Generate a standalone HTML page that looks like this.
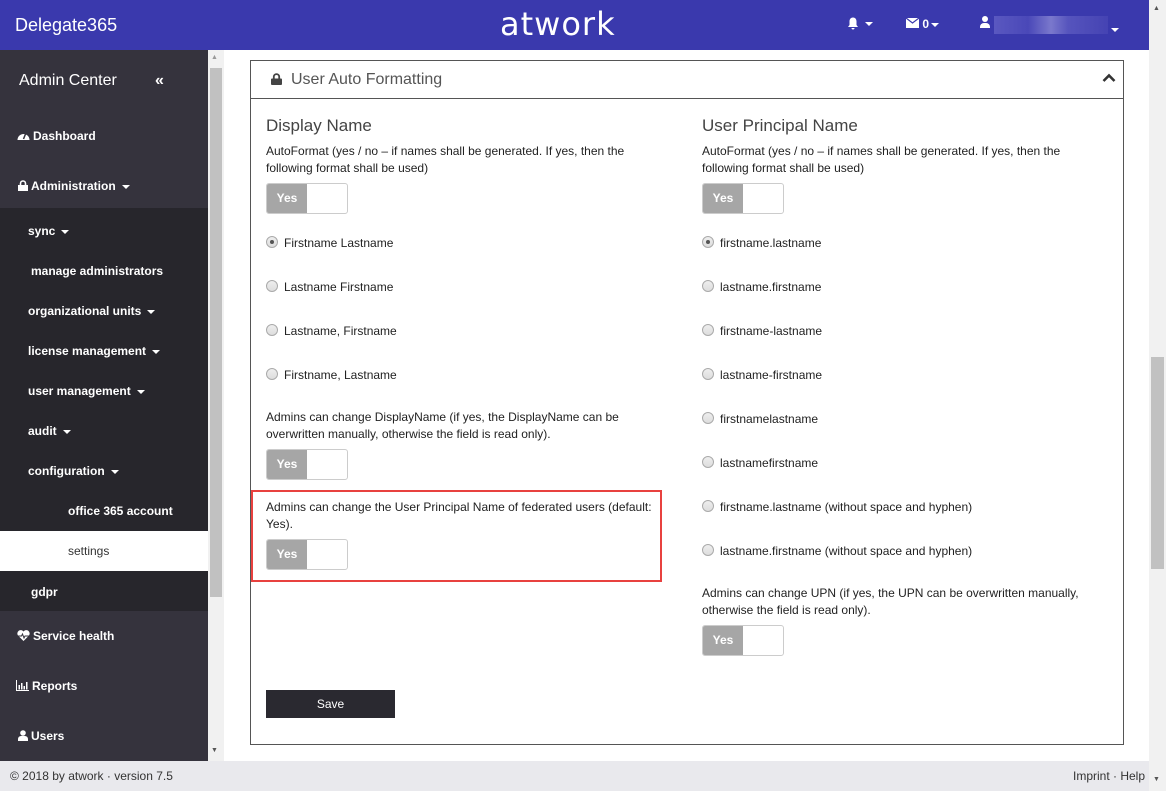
<!DOCTYPE html>
<html><head><meta charset="utf-8"><style>
*{margin:0;padding:0;box-sizing:border-box}
body{width:1166px;height:791px;overflow:hidden;font-family:"Liberation Sans",Arial,sans-serif;background:#fff;position:relative;font-size:12px;color:#222}
.hdr{position:absolute;left:0;top:0;width:1149px;height:50px;background:#3a39ad;color:#fff}
.abs{position:absolute}
.side{position:absolute;left:0;top:50px;width:208px;height:711px;background:#35333d;color:#fff}
.sub{position:absolute;left:0;top:158px;width:208px;height:403px;background:#27262c}
.si{position:absolute;font-size:12px;font-weight:bold;color:#fff}
.si svg{vertical-align:-1px;margin-right:3px}
.sb{position:absolute;left:208px;top:50px;width:16px;height:711px;background:#f1f1f1}
.foot{position:absolute;left:0;top:761px;width:1149px;height:30px;background:#e9e9ed;font-size:12px;color:#333}
.vsb{position:absolute;left:1149px;top:0;width:17px;height:791px;background:#f1f1f1}
.panel{position:absolute;left:250px;top:60px;width:874px;height:685px;border:1px solid #555}
.ph{height:38px;border-bottom:1px solid #555;position:relative}
h3{position:absolute;font-weight:normal;font-size:17px;color:#444}
.t{position:absolute;font-size:12px;line-height:17px;color:#222}
.tog{position:absolute;width:82px;height:31px;border:1px solid #ccc;border-radius:3px;overflow:hidden;background:#fff}
.tog b{display:block;width:40px;height:100%;background:#a6a6a6;color:#fff;font-size:12px;line-height:29px;text-align:center}
.r{position:absolute;font-size:12px;color:#222}
.r i{position:absolute;left:-18px;top:0;width:12px;height:12px;border-radius:50%;border:1px solid #aaa;background:linear-gradient(#eee,#ddd)}
.r i.on::after{content:"";position:absolute;left:3px;top:3px;width:4px;height:4px;border-radius:50%;background:#555}
.tri{display:inline-block;width:0;height:0;border-left:4px solid transparent;border-right:4px solid transparent;border-top:4px solid #fff;vertical-align:middle;margin-left:6px}
</style></head><body>
<div class="hdr">
<div class="abs" style="left:15px;top:15px;font-size:18px">Delegate365</div>
<div class="abs" style="left:500px;top:5px;font-size:32px;letter-spacing:1px;font-family:'DejaVu Sans',sans-serif">atwork</div>
<div class="abs" style="left:847px;top:17px"><svg width="12" height="13" viewBox="0 0 12 13"><path d="M6 0.5C3.5 0.5 2.5 2.5 2.5 4.5V8L1 10H11L9.5 8V4.5C9.5 2.5 8.5 0.5 6 0.5Z M4.5 11A1.5 1.5 0 0 0 7.5 11Z" fill="#fff"/></svg><span class="tri" style="vertical-align:4px"></span></div>
<div class="abs" style="left:906px;top:17px;font-size:12px;font-weight:bold"><svg width="13" height="10" viewBox="0 0 13 10"><rect x="0" y="0" width="13" height="10" fill="#fff"/><path d="M0 0L6.5 5L13 0" stroke="#3a39ad" stroke-width="1.2" fill="none"/></svg> 0<span class="tri" style="margin-left:2px"></span></div>
<div class="abs" style="left:980px;top:16px;width:10px;height:12px;"><div style="width:6px;height:6px;border-radius:50%;background:#fff;margin-left:2px"></div><div style="width:10px;height:5px;background:#fff;border-radius:4px 4px 0 0;margin-top:1px"></div></div>
<div class="abs" style="left:994px;top:16px;width:114px;height:18px;background:linear-gradient(90deg,#5a58c0 0,#4a48b8 30%,#7a78cc 50%,#5654bd 65%,#4543b3 100%)"></div>
<div class="abs" style="left:1111px;top:22px"><span class="tri" style="margin:0"></span></div>
</div>
<div class="side">
<div class="abs" style="left:19px;top:22px;font-size:16px">Admin Center</div>
<div class="abs" style="left:155px;top:22px;font-size:16px;font-weight:bold">«</div>
<div class="si" style="left:17px;top:79px"><svg width="13" height="11" viewBox="0 0 13 11"><path d="M0.5 10A6 6 0 0 1 12.5 10Z" fill="#fff"/><path d="M6.5 9L8.5 4" stroke="#35333d" stroke-width="1.5"/></svg>Dashboard</div>
<div class="si" style="left:18px;top:129px"><svg width="10" height="11" viewBox="0 0 10 11"><rect x="0" y="5" width="10" height="6" fill="#fff"/><path d="M2.5 5V3.5A2.5 2.5 0 0 1 7.5 3.5V5" stroke="#fff" stroke-width="1.6" fill="none"/></svg>Administration<span class="tri"></span></div>
<div class="sub"></div>
<div class="si" style="left:28px;top:174px">sync<span class="tri"></span></div>
<div class="si" style="left:31px;top:214px">manage administrators</div>
<div class="si" style="left:28px;top:254px">organizational units<span class="tri"></span></div>
<div class="si" style="left:28px;top:294px">license management<span class="tri"></span></div>
<div class="si" style="left:28px;top:334px">user management<span class="tri"></span></div>
<div class="si" style="left:28px;top:374px">audit<span class="tri"></span></div>
<div class="si" style="left:28px;top:414px">configuration<span class="tri"></span></div>
<div class="si" style="left:68px;top:454px">office 365 account</div>
<div class="abs" style="left:0;top:481px;width:208px;height:40px;background:#fff"></div>
<div class="si" style="left:68px;top:494px;color:#333;font-weight:normal">settings</div>
<div class="si" style="left:31px;top:535px">gdpr</div>
<div class="si" style="left:17px;top:579px"><svg width="13" height="11" viewBox="0 0 13 11"><path d="M6.5 11L1 5.5A3 3 0 0 1 6.5 1.5A3 3 0 0 1 12 5.5Z" fill="#fff"/><path d="M1 6H4.5L5.5 4L7 8L8 6H12" stroke="#35333d" stroke-width="1" fill="none"/></svg>Service health</div>
<div class="si" style="left:16px;top:629px"><svg width="13" height="11" viewBox="0 0 13 11"><path d="M0.5 0V10.5H13" stroke="#fff" stroke-width="1" fill="none"/><rect x="2.5" y="5" width="1.5" height="4.5" fill="#fff"/><rect x="5" y="3" width="1.5" height="6.5" fill="#fff"/><rect x="7.5" y="6" width="1.5" height="3.5" fill="#fff"/><rect x="10" y="2" width="1.5" height="7.5" fill="#fff"/></svg>Reports</div>
<div class="si" style="left:18px;top:679px"><svg width="10" height="11" viewBox="0 0 10 11"><circle cx="5" cy="3" r="2.8" fill="#fff"/><path d="M0 11V9A3 3 0 0 1 3 6H7A3 3 0 0 1 10 9V11Z" fill="#fff"/></svg>Users</div>
</div>
<div class="sb"><div class="abs" style="left:3px;top:4px;font-size:7px;color:#999">▲</div><div class="abs" style="left:2px;top:18px;width:12px;height:529px;background:#c1c1c1"></div><div class="abs" style="left:3px;top:697px;font-size:7px;color:#555">▼</div></div>
<div class="vsb"><div class="abs" style="left:4px;top:5px;font-size:7px;color:#555">▲</div><div class="abs" style="left:2px;top:357px;width:13px;height:212px;background:#c1c1c1"></div><div class="abs" style="left:4px;top:776px;font-size:7px;color:#555">▼</div></div>
<div class="foot"><div class="abs" style="left:10px;top:8px">© 2018 by atwork · version 7.5</div><div class="abs" style="left:1073px;top:8px">Imprint · Help</div></div>
<div class="panel">
<div class="ph"><div class="abs" style="left:20px;top:12px"><svg width="11" height="12" viewBox="0 0 11 12"><rect x="0" y="5.5" width="11" height="6.5" rx="1" fill="#444"/><path d="M2.8 5.5V3.8A2.7 2.7 0 0 1 8.2 3.8V5.5" stroke="#444" stroke-width="1.8" fill="none"/></svg></div><div class="abs" style="left:40px;top:10px;font-size:16px;color:#555">User Auto Formatting</div><div class="abs" style="left:851px;top:11px"><svg width="14" height="10" viewBox="0 0 14 10"><path d="M1.5 8L7 2.5L12.5 8" stroke="#333" stroke-width="2.6" fill="none"/></svg></div></div>
</div>
<h3 style="left:266px;top:116px">Display Name</h3>
<div class="t" style="left:266px;top:143px;width:400px">AutoFormat (yes / no – if names shall be generated. If yes, then the following format shall be used)</div>
<div class="tog" style="left:266px;top:183px"><b>Yes</b></div>
<div class="r" style="left:284px;top:236px"><i class="on"></i>Firstname Lastname</div>
<div class="r" style="left:284px;top:280px"><i></i>Lastname Firstname</div>
<div class="r" style="left:284px;top:324px"><i></i>Lastname, Firstname</div>
<div class="r" style="left:284px;top:368px"><i></i>Firstname, Lastname</div>
<div class="t" style="left:266px;top:409px;width:380px">Admins can change DisplayName (if yes, the DisplayName can be overwritten manually, otherwise the field is read only).</div>
<div class="tog" style="left:266px;top:449px"><b>Yes</b></div>
<div class="abs" style="left:251px;top:490px;width:411px;height:92px;border:2px solid #e8413f"></div>
<div class="t" style="left:266px;top:499px;width:392px">Admins can change the User Principal Name of federated users (default: Yes).</div>
<div class="tog" style="left:266px;top:539px"><b>Yes</b></div>
<div class="abs" style="left:266px;top:690px;width:129px;height:28px;background:#2a2930;color:#fff;font-size:12px;text-align:center;line-height:28px">Save</div>
<h3 style="left:702px;top:116px">User Principal Name</h3>
<div class="t" style="left:702px;top:143px;width:400px">AutoFormat (yes / no – if names shall be generated. If yes, then the following format shall be used)</div>
<div class="tog" style="left:702px;top:183px"><b>Yes</b></div>
<div class="r" style="left:720px;top:236px"><i class="on"></i>firstname.lastname</div>
<div class="r" style="left:720px;top:280px"><i></i>lastname.firstname</div>
<div class="r" style="left:720px;top:324px"><i></i>firstname-lastname</div>
<div class="r" style="left:720px;top:368px"><i></i>lastname-firstname</div>
<div class="r" style="left:720px;top:412px"><i></i>firstnamelastname</div>
<div class="r" style="left:720px;top:456px"><i></i>lastnamefirstname</div>
<div class="r" style="left:720px;top:500px"><i></i>firstname.lastname (without space and hyphen)</div>
<div class="r" style="left:720px;top:544px"><i></i>lastname.firstname (without space and hyphen)</div>
<div class="t" style="left:702px;top:585px;width:400px">Admins can change UPN (if yes, the UPN can be overwritten manually, otherwise the field is read only).</div>
<div class="tog" style="left:702px;top:625px"><b>Yes</b></div>
</body></html>
